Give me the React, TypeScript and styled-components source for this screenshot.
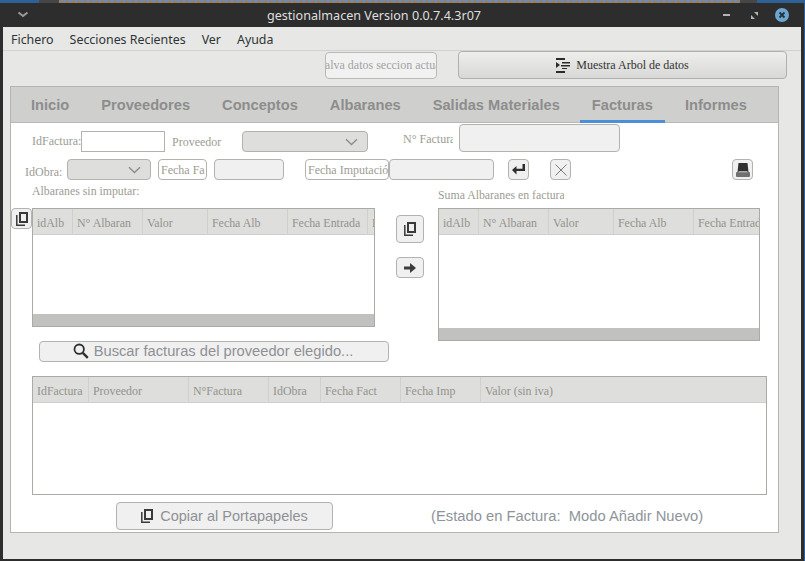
import React from "react";
import styled, { createGlobalStyle } from "styled-components";

const GlobalStyle = createGlobalStyle`
  html, body { margin: 0; padding: 0; background: #2f6199; overflow: hidden; }
  #root { width: 805px; height: 561px; }
`;

const Desktop = styled.div`
  width: 805px;
  height: 561px;
  display: flex;
  flex-direction: column;
  overflow: hidden;
  background: #2f6199;
`;

const TopStrip = styled.div`
  height: 3px;
  flex: none;
  display: flex;
`;

const StripPiece = styled.div<{ $width: number; $color: string }>`
  width: ${p => p.$width}px;
  flex: none;
  background: ${p => p.$color};
`;

const StripDashes = styled.div`
  flex: 1;
  background:
    linear-gradient(#5f8fc4 0 1px, transparent 1px),
    repeating-linear-gradient(90deg, #b9772f 0 4px, #5f8fc4 4px 6px);
`;

const Win = styled.div`
  flex: 1;
  margin-right: 1px;
  background: #2d2d2d;
  padding: 0 3px 2px 3px;
  display: flex;
  flex-direction: column;
  min-height: 0;
`;

const TitleBar = styled.div`
  height: 24px;
  flex: none;
  display: grid;
  grid-template-columns: 40px 1fr 90px;
  align-items: center;
  color: #dfdfdf;
  font: 12.6px "Noto Sans", sans-serif;
`;

const Title = styled.div`
  text-align: center;
  padding-right: 6px;
`;

const WinControls = styled.div`
  display: flex;
  align-items: center;
  justify-content: flex-end;
  gap: 17px;
  padding-right: 12px;
`;

const Client = styled.div`
  flex: 1;
  background: #e7e7e5;
  display: flex;
  flex-direction: column;
  min-height: 0;
`;

const MenuBar = styled.div`
  height: 24px;
  flex: none;
  box-sizing: border-box;
  display: flex;
  align-items: center;
  gap: 16px;
  padding: 1px 0 0 8px;
  border-bottom: 1px solid #d2d2d0;
  color: #2e3436;
  font: 12.4px "Noto Sans", sans-serif;
`;

const ToolBar = styled.div`
  height: 35px;
  flex: none;
  display: flex;
  align-items: flex-start;
  padding-left: 322px;
  gap: 21px;
`;

const SaveButton = styled.div`
  width: 112px;
  height: 27px;
  margin-top: 1px;
  box-sizing: border-box;
  border: 1px solid #b9b9b5;
  border-radius: 4px;
  background: #f1f1f1;
  color: #a2a2a0;
  font: 12px "Liberation Serif", serif;
  white-space: nowrap;
  overflow: hidden;
  display: flex;
  align-items: center;
  justify-content: center;
`;

const TreeButton = styled.div`
  width: 329px;
  height: 28px;
  box-sizing: border-box;
  border: 1px solid #b0b0ac;
  border-radius: 4px;
  background: linear-gradient(#eeeeec, #d8d8d6);
  color: #333;
  font: 12px "Liberation Serif", serif;
  display: flex;
  align-items: center;
  justify-content: center;
  gap: 6px;
`;

const Panel = styled.div`
  margin-left: 7px;
  width: 769px;
  height: 447px;
  box-sizing: border-box;
  border: 1px solid #b4b4b0;
  background: #fff;
  display: flex;
  flex-direction: column;
`;

const TabBar = styled.div`
  height: 36px;
  flex: none;
  box-sizing: border-box;
  background: #cfcfcd;
  border-bottom: 1px solid #b8b8b4;
  display: flex;
  gap: 8px;
  padding-left: 8px;
`;

const Tab = styled.div<{ $active?: boolean }>`
  box-sizing: border-box;
  height: 36px;
  padding: 2px 12px 0;
  display: flex;
  align-items: center;
  color: #8d8d8d;
  font: bold 14.67px "Liberation Sans", sans-serif;
  border-bottom: 3px solid ${p => (p.$active ? "#4a8fd8" : "transparent")};
`;

const Body = styled.div`
  flex: 1;
  display: flex;
  flex-direction: column;
  min-height: 0;
  padding-top: 1px;
`;

const RowOne = styled.div`
  height: 28px;
  flex: none;
  display: flex;
  align-items: flex-end;
`;

const RowTwo = styled.div`
  height: 21px;
  margin-top: 7px;
  flex: none;
  display: flex;
  align-items: stretch;
`;

// $shift moves the text down inside the label by enlarging its line box
const Label = styled.div<{ $left?: number; $width?: number; $shift?: number }>`
  margin-left: ${p => p.$left ?? 0}px;
  ${p => (p.$width ? `width: ${p.$width}px;` : "")}
  flex: none;
  height: 21px;
  color: #9c9c94;
  font: 12px "Liberation Serif", serif;
  line-height: ${p => 21 + (p.$shift ?? 0) * 2}px;
  white-space: nowrap;
  overflow: hidden;
`;

const Field = styled.div<{ $left?: number; $width: number; $height?: number; $white?: boolean; $square?: boolean }>`
  margin-left: ${p => p.$left ?? 0}px;
  width: ${p => p.$width}px;
  height: ${p => p.$height ?? 21}px;
  box-sizing: border-box;
  flex: none;
  border: 1px solid #b2b2ae;
  border-radius: ${p => (p.$square ? 0 : 4)}px;
  background: ${p => (p.$white ? "#fff" : "#f0f0f0")};
`;

const TextBox = styled(Field)`
  color: #9c9c94;
  font: 12px "Liberation Serif", serif;
  line-height: 21px;
  padding-left: 2px;
  white-space: nowrap;
  overflow: hidden;
`;

const Select = styled.div<{ $left?: number; $width: number }>`
  margin-left: ${p => p.$left ?? 0}px;
  width: ${p => p.$width}px;
  height: 21px;
  box-sizing: border-box;
  flex: none;
  border: 1px solid #b2b2ae;
  border-radius: 4px;
  background: #dededc;
  display: flex;
  align-items: center;
  justify-content: flex-end;
  padding-right: 9px;
`;

const IconButton = styled.div<{ $left?: number; $width?: number; $height?: number }>`
  margin-left: ${p => p.$left ?? 0}px;
  width: ${p => p.$width ?? 21}px;
  height: ${p => p.$height ?? 21}px;
  box-sizing: border-box;
  flex: none;
  border: 1px solid #b2b2ae;
  border-radius: 4px;
  background: #f0f0f0;
  display: flex;
  align-items: center;
  justify-content: center;
`;

const CaptionRow = styled.div`
  height: 28px;
  flex: none;
  display: flex;
`;

const Caption = styled.div<{ $left: number; $top: number; $width: number }>`
  margin-left: ${p => p.$left}px;
  padding-top: ${p => p.$top}px;
  width: ${p => p.$width}px;
  flex: none;
  color: #9c9c94;
  font: 11.8px "Liberation Serif", serif;
  white-space: nowrap;
  overflow: hidden;
`;

const Tables = styled.div`
  height: 168px;
  flex: none;
  display: flex;
  align-items: flex-start;
`;

const LeftCol = styled.div`
  width: 378px;
  flex: none;
  display: flex;
  flex-direction: column;
`;

const LeftTableRow = styled.div`
  display: flex;
  align-items: flex-start;
`;

const MidCol = styled.div`
  margin-left: 7px;
  margin-top: 7px;
  width: 28px;
  flex: none;
  display: flex;
  flex-direction: column;
  gap: 14px;
`;

const DataTable = styled.div<{ $width: number; $height: number; $left?: number }>`
  margin-left: ${p => p.$left ?? 0}px;
  width: ${p => p.$width}px;
  height: ${p => p.$height}px;
  box-sizing: border-box;
  flex: none;
  border: 1px solid #ababa5;
  background: #fff;
  display: flex;
  flex-direction: column;
`;

const THead = styled.div`
  height: 26px;
  flex: none;
  box-sizing: border-box;
  background: #dededc;
  border-bottom: 1px solid #cfcfcb;
  display: flex;
  overflow: hidden;
`;

const THeadCell = styled.div<{ $width: number }>`
  width: ${p => p.$width}px;
  flex: none;
  box-sizing: border-box;
  padding-left: 4px;
  border-right: 1px solid #d0d0cc;
  color: #93938d;
  font: 11.9px "Liberation Serif", serif;
  line-height: 29px;
  white-space: nowrap;
  overflow: hidden;
  &:last-child { border-right: 0; }
`;

const TBody = styled.div`
  flex: 1;
`;

const HScroll = styled.div`
  height: 12px;
  flex: none;
  background: #c1c2c0;
`;

const SearchButton = styled.div`
  margin-left: 28px;
  margin-top: 14px;
  width: 350px;
  height: 21px;
  box-sizing: border-box;
  border: 1px solid #b2b2ae;
  border-radius: 4px;
  background: #f0f0f0;
  color: #8e9094;
  font: 14.7px "Liberation Sans", sans-serif;
  display: flex;
  align-items: center;
  justify-content: center;
  gap: 5px;
  padding: 0 2px 1px 0;
`;

const Footer = styled.div`
  display: flex;
  align-items: center;
  margin-top: 7px;
`;

const CopyButton = styled.div`
  margin-left: 105px;
  width: 217px;
  height: 28px;
  box-sizing: border-box;
  border: 1px solid #b2b2ae;
  border-radius: 4px;
  background: #f0f0f0;
  color: #8e9094;
  font: 14.5px "Liberation Sans", sans-serif;
  display: flex;
  align-items: center;
  justify-content: center;
  gap: 7px;
`;

const Status = styled.div`
  margin-left: 98px;
  color: #8e9499;
  font: 14.75px "Liberation Sans", sans-serif;
  white-space: pre;
`;

const CopyIcon = () => (
  <svg width="12" height="14" viewBox="0 0 12 14" fill="none" stroke="#3a3a3a">
    <rect x="4" y="1" width="7" height="9" strokeWidth="2" />
    <path d="M0.8 3V13.2H9" strokeWidth="1.5" />
  </svg>
);

const Chevron = () => (
  <svg width="13" height="8" viewBox="0 0 13 8" fill="none" stroke="#8b8b87" strokeWidth="1.3">
    <path d="M1 1.2l5.5 5.3 5.5-5.3" />
  </svg>
);

const columnsLeft = [
  ["idAlb", 40],
  ["N° Albaran", 70],
  ["Valor", 65],
  ["Fecha Alb", 80],
  ["Fecha Entrada", 80],
  ["Fecha", 30],
] as const;

const columnsRight = [
  ["idAlb", 40],
  ["N° Albaran", 70],
  ["Valor", 65],
  ["Fecha Alb", 80],
  ["Fecha Entrada", 65],
] as const;

const columnsBottom = [
  ["IdFactura", 56],
  ["Proveedor", 100],
  ["N°Factura", 80],
  ["IdObra", 52],
  ["Fecha Fact", 80],
  ["Fecha Imp", 80],
  ["Valor (sin iva)", 285],
] as const;

export default function App() {
  return (
    <Desktop>
      <GlobalStyle />
      <TopStrip>
        <StripPiece $width={39} $color="#2f6199" />
        <StripPiece $width={20} $color="#464646" />
        <StripDashes />
        <StripPiece $width={17} $color="#464646" />
        <StripPiece $width={48} $color="#2f6199" />
      </TopStrip>
      <Win>
        <TitleBar>
          <svg width="40" height="12" viewBox="0 0 40 12" fill="none" stroke="#9a9a9a" strokeWidth="2">
            <path d="M15.5 3.5l4.5 3.5 4.5-3.5" />
          </svg>
          <Title>gestionalmacen Version 0.0.7.4.3r07</Title>
          <WinControls>
            <svg width="11" height="2" viewBox="0 0 11 2"><rect width="7" height="2" fill="#b5b5b5" /></svg>
            <svg width="7" height="7" viewBox="0 0 7 7" fill="#b5b5b5"><path d="M3 0h4v4zM0 3l4 4H0z" /></svg>
            <svg width="14" height="14" viewBox="0 0 14 14">
              <circle cx="7" cy="7" r="7" fill="#6ba7cf" />
              <path d="M4.5 4.5l5 5M9.5 4.5l-5 5" stroke="#26323a" strokeWidth="1.8" />
            </svg>
          </WinControls>
        </TitleBar>
        <Client>
          <MenuBar>
            <span>Fichero</span>
            <span>Secciones Recientes</span>
            <span>Ver</span>
            <span>Ayuda</span>
          </MenuBar>
          <ToolBar>
            <SaveButton>Salva datos seccion actual</SaveButton>
            <TreeButton>
              <svg width="14" height="15" viewBox="0 0 14 15" fill="#2b2b2b">
                <rect x="0" y="0" width="9" height="2" />
                <path d="M0 4l4 3-4 3z" />
                <rect x="6" y="4" width="8" height="1.5" />
                <rect x="5" y="7" width="9" height="1.5" />
                <rect x="6" y="10" width="5" height="1" />
                <rect x="0" y="13" width="9" height="2" />
              </svg>
              Muestra Arbol de datos
            </TreeButton>
          </ToolBar>
          <Panel>
            <TabBar>
              <Tab>Inicio</Tab>
              <Tab>Proveedores</Tab>
              <Tab>Conceptos</Tab>
              <Tab>Albaranes</Tab>
              <Tab>Salidas Materiales</Tab>
              <Tab $active>Facturas</Tab>
              <Tab>Informes</Tab>
            </TabBar>
            <Body>
              <RowOne>
                <Label $left={21} $width={49}>IdFactura:</Label>
                <Field $width={84} $white $square />
                <Label $left={7} $width={70} $shift={1}>Proveedor</Label>
                <Select $width={126}><Chevron /></Select>
                <Label $left={35} $width={50} $shift={-2}>N° Factura</Label>
                <Field $left={6} $width={161} $height={28} />
              </RowOne>
              <RowTwo>
                <Label $left={14} $width={42} $shift={3}>IdObra:</Label>
                <Select $width={84}><Chevron /></Select>
                <TextBox $left={7} $width={49} $white>Fecha Fa</TextBox>
                <Field $left={7} $width={70} />
                <TextBox $left={21} $width={84} $white>Fecha Imputació</TextBox>
                <Field $width={105} />
                <IconButton $left={14}>
                  <svg width="13" height="11" viewBox="0 0 13 11" fill="#2e2e2e">
                    <path d="M10.5 0H13v7H4.5v3.5L0 6l4.5-4v2.8h6z" />
                  </svg>
                </IconButton>
                <IconButton $left={21}>
                  <svg width="12" height="12" viewBox="0 0 12 12" stroke="#7a7a7a" strokeWidth="1">
                    <path d="M0.5 0.5l11 11M11.5 0.5l-11 11" />
                  </svg>
                </IconButton>
                <IconButton $left={161}>
                  <svg width="14" height="14" viewBox="0 0 14 14">
                    <path d="M2.5 0h9l1 9h-11z" fill="#303030" />
                    <rect x="0" y="9" width="14" height="5" rx="1" fill="#6f6f6f" />
                    <rect x="2.5" y="8" width="9" height="1.5" fill="#a8a8a8" />
                  </svg>
                </IconButton>
              </RowTwo>
              <CaptionRow>
                <Caption $left={21} $top={4} $width={107}>Albaranes sin imputar:</Caption>
                <Caption $left={299} $top={8} $width={126}>Suma Albaranes en factura</Caption>
              </CaptionRow>
              <Tables>
                <LeftCol>
                  <LeftTableRow>
                    <IconButton><CopyIcon /></IconButton>
                    <DataTable $width={343} $height={119}>
                      <THead>
                        {columnsLeft.map(([t, w]) => <THeadCell key={t} $width={w}>{t}</THeadCell>)}
                      </THead>
                      <TBody />
                      <HScroll />
                    </DataTable>
                  </LeftTableRow>
                  <SearchButton>
                    <svg width="16" height="16" viewBox="0 0 16 16" fill="none" stroke="#2f2f2f">
                      <circle cx="6.2" cy="6.2" r="4.7" strokeWidth="1.8" />
                      <path d="M9.8 9.8l5 5" strokeWidth="2.4" />
                    </svg>
                    Buscar facturas del proveedor elegido...
                  </SearchButton>
                </LeftCol>
                <MidCol>
                  <IconButton $width={28} $height={28}><CopyIcon /></IconButton>
                  <IconButton $width={28} $height={21}>
                    <svg width="12" height="10" viewBox="0 0 12 10" fill="#3c3c3c">
                      <path d="M0 3.5h6V0l6 5-6 5V6.5H0z" />
                    </svg>
                  </IconButton>
                </MidCol>
                <DataTable $left={14} $width={322} $height={133}>
                  <THead>
                    {columnsRight.map(([t, w]) => <THeadCell key={t} $width={w}>{t}</THeadCell>)}
                  </THead>
                  <TBody />
                  <HScroll />
                </DataTable>
              </Tables>
              <DataTable $left={21} $width={735} $height={119}>
                <THead>
                  {columnsBottom.map(([t, w]) => <THeadCell key={t} $width={w}>{t}</THeadCell>)}
                </THead>
                <TBody />
              </DataTable>
              <Footer>
                <CopyButton><CopyIcon />Copiar al Portapapeles</CopyButton>
                <Status>(Estado en Factura:  Modo Añadir Nuevo)</Status>
              </Footer>
            </Body>
          </Panel>
        </Client>
      </Win>
    </Desktop>
  );
}
